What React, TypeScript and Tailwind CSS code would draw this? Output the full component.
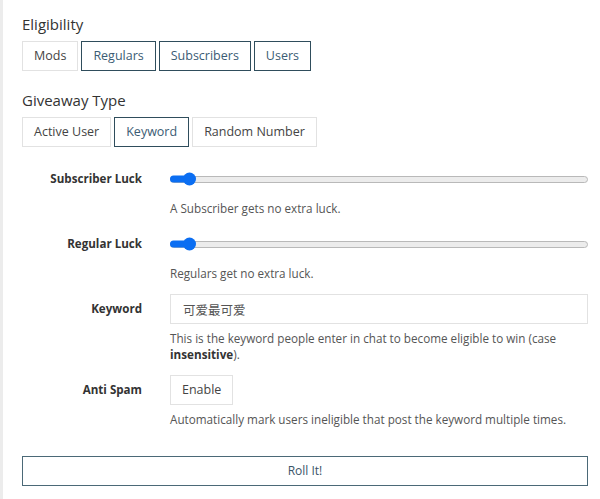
import React, { useState } from 'react';

const font = { fontFamily: '"Open Sans", "Noto Sans CJK SC", sans-serif' };

function Toggle({ label, active, onClick }: { label: string; active?: boolean; onClick?: () => void }) {
  return (
    <button
      onClick={onClick}
      className={`h-[30px] px-[11px] text-[12.5px] bg-white border ${
        active ? 'border-[#2f4d5c] text-[#3b5c74]' : 'border-[#e2e2e2] text-[#444]'
      }`}
    >
      {label}
    </button>
  );
}

function Slider({ value }: { value: number }) {
  return (
    <div className="relative h-[30px] flex items-center">
      <div className="w-full h-[7px] rounded-full border border-[#b9b9b9] bg-[#ececec]"></div>
      <div className="absolute left-0 top-1/2 -translate-y-1/2 h-[7px] rounded-l-full bg-[#0b6ef2]" style={{ width: 18 + value }}></div>
      <div className="absolute top-1/2 -translate-y-1/2 w-[13px] h-[13px] rounded-full bg-[#0b6ef2]" style={{ left: 13 + value }}></div>
    </div>
  );
}

function Row({ label, children, help }: { label: string; children: React.ReactNode; help: React.ReactNode }) {
  return (
    <div className="flex">
      <div className="w-[148px] shrink-0 pr-[28px] h-[30px] flex items-center justify-end text-[11.6px] font-bold text-[#333]">
        {label}
      </div>
      <div className="flex-1">
        {children}
        <p className="mt-[6px] text-[11.7px] leading-4 text-[#555]">{help}</p>
      </div>
    </div>
  );
}

export default function App() {
  const [elig, setElig] = useState(['Regulars', 'Subscribers', 'Users']);
  const [type, setType] = useState('Keyword');
  const [keyword, setKeyword] = useState('可爱最可爱');

  const toggleElig = (k: string) =>
    setElig(elig.includes(k) ? elig.filter(e => e !== k) : [...elig, k]);

  return (
    <div className="min-h-screen bg-white flex" style={font}>
      <div className="w-[3px] bg-[#ececec] shrink-0"></div>
      <div className="flex-1 pl-[19px] pr-[12px] pt-[14px]">
        <h3 className="text-[15px] leading-5 text-[#333] mb-[7px]">Eligibility</h3>
        <div className="flex gap-[3px]">
          {['Mods', 'Regulars', 'Subscribers', 'Users'].map(k => (
            <Toggle key={k} label={k} active={elig.includes(k)} onClick={() => toggleElig(k)} />
          ))}
        </div>

        <h3 className="text-[15px] leading-5 text-[#333] mt-[19px] mb-[7px]">Giveaway Type</h3>
        <div className="flex gap-[3px]">
          {['Active User', 'Keyword', 'Random Number'].map(k => (
            <Toggle key={k} label={k} active={type === k} onClick={() => setType(k)} />
          ))}
        </div>

        <div className="mt-[17px] flex flex-col gap-[13px]">
          <Row label="Subscriber Luck" help="A Subscriber gets no extra luck.">
            <Slider value={0} />
          </Row>
          <Row label="Regular Luck" help="Regulars get no extra luck.">
            <Slider value={0} />
          </Row>
          <Row
            label="Keyword"
            help={
              <>
                This is the keyword people enter in chat to become eligible to win (case <b className="text-[#333]">insensitive</b>).
              </>
            }
          >
            <input
              value={keyword}
              onChange={e => setKeyword(e.target.value)}
              className="w-full h-[30px] border border-[#e2e2e2] px-[12px] text-[12.5px] text-[#555] outline-none"
            />
          </Row>
          <Row label="Anti Spam" help="Automatically mark users ineligible that post the keyword multiple times.">
            <Toggle label="Enable" />
          </Row>
        </div>

        <button className="mt-[29px] w-full h-[30px] border border-[#4b6977] text-[12px] text-[#3b5468] bg-white">
          Roll It!
        </button>
      </div>
    </div>
  );
}
